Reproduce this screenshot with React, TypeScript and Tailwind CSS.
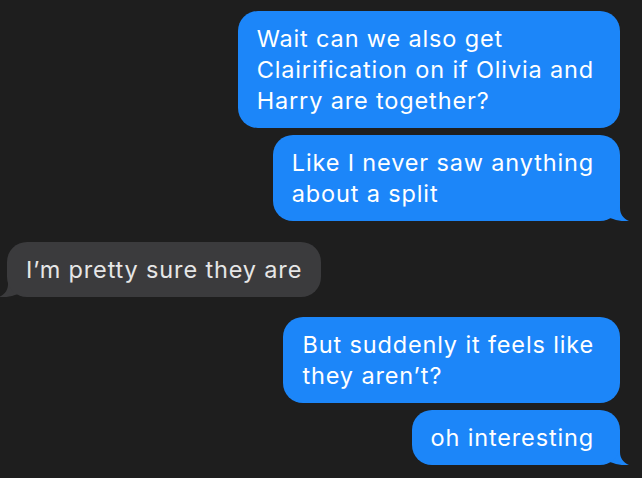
import React from "react";

const BLUE = "#1c86f9";
const GRAY = "#3b3b3d";

function TailRight() {
  return (
    <svg
      className="absolute bottom-0 right-[-9px] w-[21px] h-[22px]"
      viewBox="0 0 21 22"
      fill={BLUE}
    >
      <path d="M12 0 L12 9 C12 15 15 19.5 21 22 C15 22.6 9 21.8 2 19 L0 19 L0 0 Z" />
    </svg>
  );
}

function TailLeft() {
  return (
    <svg
      className="absolute bottom-0 left-[-8px] w-[21px] h-[22px]"
      viewBox="0 0 21 22"
      fill={GRAY}
    >
      <path d="M9 0 L9 9 C9 15 6 19.5 0 22 C6 22.6 12 21.8 19 19 L21 19 L21 0 Z" />
    </svg>
  );
}

function Sent({ lines, tail }: { lines: string[]; tail?: boolean }) {
  return (
    <div className="relative self-end">
      <div className="relative z-10 rounded-[20px] bg-[#1c86f9] pl-[19px] pr-[26px] py-[12px] text-white">
        {lines.map((l, i) => (
          <div key={i} className="whitespace-nowrap">
            {l}
          </div>
        ))}
      </div>
      {tail && <TailRight />}
    </div>
  );
}

function Received({ lines }: { lines: string[] }) {
  return (
    <div className="relative self-start">
      <div className="relative z-10 rounded-[20px] bg-[#3b3b3d] px-[19px] py-[12px] text-[#e6e6e6]">
        {lines.map((l, i) => (
          <div key={i} className="whitespace-nowrap">
            {l}
          </div>
        ))}
      </div>
      <TailLeft />
    </div>
  );
}

export default function App() {
  return (
    <div
      className="w-[642px] h-[478px] overflow-hidden bg-[#1e1e1e] flex flex-col pt-[11px] pl-[7px] pr-[22px] text-[23.5px] leading-[31px] tracking-[0.85px]"
      style={{ fontFamily: "Inter, 'Liberation Sans', sans-serif" }}
    >
      <Sent lines={["Wait can we also get", "Clairification on if Olivia and", "Harry are together?"]} />
      <div className="h-[7px]" />
      <Sent lines={["Like I never saw anything", "about a split"]} tail />
      <div className="h-[21px]" />
      <Received lines={["I’m pretty sure they are"]} />
      <div className="h-[20px]" />
      <Sent lines={["But suddenly it feels like", "they aren’t?"]} />
      <div className="h-[7px]" />
      <Sent lines={["oh interesting"]} tail />
    </div>
  );
}
